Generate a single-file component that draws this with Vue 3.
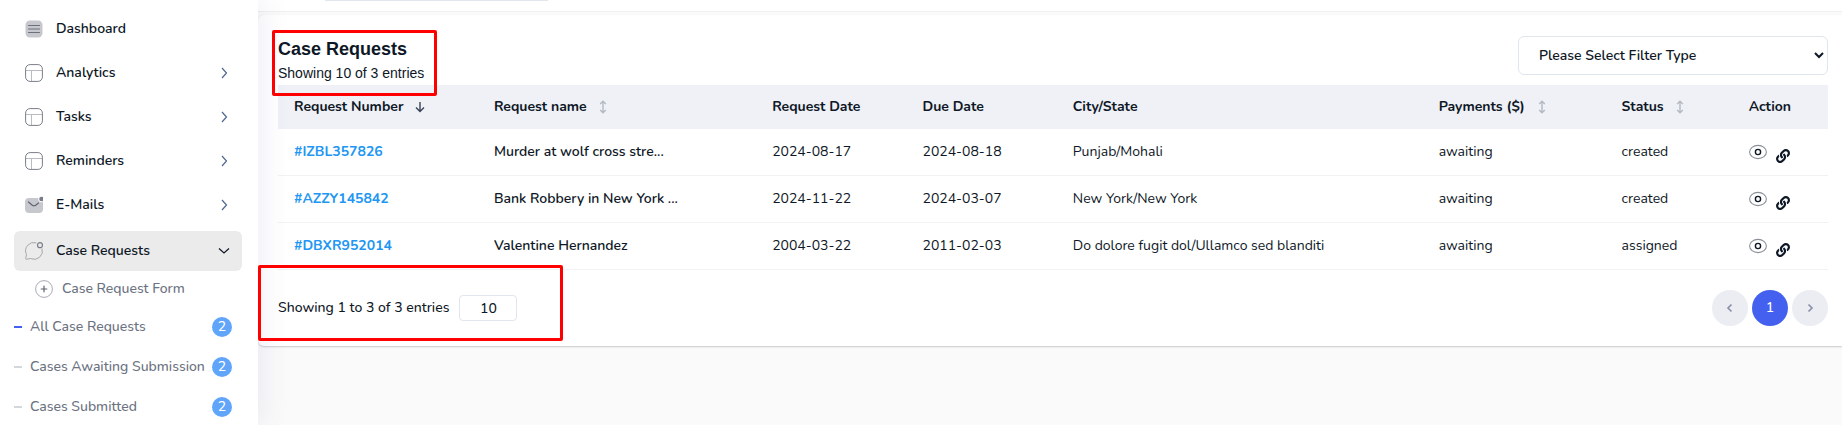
<template>
  <div class="app">
    <aside class="sidebar">
      <nav class="menu">
        <a v-for="item in menu" :key="item.label" href="#" class="menu-item" :class="{ active: item.active }">
          <svg v-if="item.icon === 'list'" class="icon" viewBox="0 0 18 18">
            <rect x="0.5" y="0.5" width="17" height="17" rx="4.5" fill="#c6c8cd" />
            <path d="M3.5 5.5h11M3.5 9h11M3.5 12.5h11" stroke="#6b707b" stroke-width="1.2" stroke-linecap="round" />
          </svg>
          <svg v-else-if="item.icon === 'layout'" class="icon" viewBox="0 0 18 18" fill="none">
            <path d="M1 6.5h16M6.5 7v10" stroke="#b9bcc2" />
            <rect x="0.6" y="0.6" width="16.8" height="16.8" rx="4.5" stroke="#787d87" />
          </svg>
          <svg v-else-if="item.icon === 'mail'" class="icon" viewBox="0 0 18 18">
            <path d="M4 2h9.2a3.6 3.6 0 0 0 4.8 4v7a4 4 0 0 1-4 4H4a4 4 0 0 1-4-4V6a4 4 0 0 1 4-4z" fill="#c6c8cd" />
            <path d="M3.5 6L7 9q2 1.5 4 0l2.500-2" fill="none" stroke="#5e636e" stroke-width="1.2" stroke-linecap="round" />
            <circle cx="16.5" cy="3" r="2.3" fill="#787d87" />
          </svg>
          <svg v-else class="icon" viewBox="0 0 18 18" fill="none">
            <path d="M11.5 0.9A8.300 8.300 0 0 0 1.5 12.5L0.7 16.6Q0.7 17.4 1.5 17.3L5.5 16.5A8.300 8.300 0 0 0 17 6.5" stroke="#a5a7ab" />
            <circle cx="15" cy="3.2" r="2.5" stroke="#787d87" stroke-width="1.2" />
          </svg>
          <span class="menu-label">{{ item.label }}</span>
          <svg v-if="item.active" class="chevron" viewBox="0 0 12 12"><path d="M1 3.5L6 8l5-4.500" /></svg>
          <svg v-else-if="item.children" class="chevron" viewBox="0 0 12 12"><path d="M4 1l4.500 5L4 11" /></svg>
        </a>
      </nav>
      <a href="#" class="form-link">
        <svg class="icon" viewBox="0 0 18 18" fill="none">
          <circle cx="9" cy="9" r="8.4" stroke="#a9acb6" />
          <path d="M9 6.200v5.600M6.200 9h5.600" stroke="#5e636e" stroke-width="1.2" stroke-linecap="round" />
        </svg>
        <span>Case Request Form</span>
      </a>
      <ul class="submenu">
        <li v-for="(sub, i) in submenu" :key="sub.label">
          <a href="#" class="sub-item" :class="{ current: i === 0 }">
            <span class="sub-label">{{ sub.label }}</span>
            <span class="badge">{{ sub.count }}</span>
          </a>
        </li>
      </ul>
    </aside>

    <main class="content">
      <header class="topbar">
        <div class="search-edge"></div>
      </header>

      <section class="panel">
        <div class="panel-head">
          <div class="panel-title">
            <h5>Case Requests</h5>
            <p>Showing 10 of 3 entries</p>
            <div class="mark mark-title"></div>
          </div>
          <select v-model="filter" class="filter" aria-label="Filter type">
            <option value="">Please Select Filter Type</option>
          </select>
        </div>

        <table class="requests">
          <thead>
            <tr>
              <th v-for="col in columns" :key="col.label" :class="col.cls">
                {{ col.label }}
                <svg v-if="col.sort === 'desc'" class="sort" viewBox="0 0 14 14"><path d="M7 2v9.500M3 7.500l4 4 4-4" stroke="#3b4356" stroke-width="1.4" /></svg>
                <svg v-else-if="col.sort" class="sort" viewBox="0 0 14 14"><path d="M7 1.500v11M4.200 4L7 1.300 9.800 4M4.200 10L7 12.700 9.800 10" stroke="#b3bac3" stroke-width="1.4" /></svg>
              </th>
            </tr>
          </thead>
          <tbody>
            <tr v-for="row in rows" :key="row.number">
              <td><a href="#" class="number">{{ row.number }}</a></td>
              <td class="name">{{ row.name }}</td>
              <td>{{ row.requested }}</td>
              <td>{{ row.due }}</td>
              <td>{{ row.place }}</td>
              <td>awaiting</td>
              <td>{{ row.status }}</td>
              <td>
                <div class="actions">
                  <button type="button" aria-label="View">
                    <svg class="eye" viewBox="0 0 18 16" fill="none">
                      <ellipse cx="9" cy="8" rx="8.4" ry="6.6" stroke="#8b8f98" stroke-width="1.1" />
                      <circle cx="9" cy="8" r="2.6" stroke="#0e1726" stroke-width="1.4" />
                    </svg>
                  </button>
                  <button type="button" aria-label="Copy link" class="link-btn">
                    <svg class="link" viewBox="0 0 512 512" fill="currentColor">
                      <path d="M326.612 185.391c59.747 59.809 58.927 155.698.36 214.59-.11.12-.24.25-.36.37l-67.2 67.2c-59.27 59.27-155.699 59.262-214.96 0-59.27-59.26-59.27-155.7 0-214.96l37.106-37.106c9.84-9.84 26.786-3.3 27.294 10.606.648 17.722 3.826 35.527 9.69 52.721 1.986 5.822.567 12.262-3.783 16.612l-13.087 13.087c-28.026 28.026-28.905 73.66-1.155 101.96 28.024 28.579 74.086 28.749 102.325.51l67.2-67.19c28.191-28.191 28.073-73.757 0-101.83-3.701-3.694-7.429-6.564-10.341-8.569a16.037 16.037 0 0 1-6.947-12.606c-.396-10.567 3.348-21.456 11.698-29.806l21.054-21.055c5.521-5.521 14.182-6.199 20.584-1.731a152.482 152.482 0 0 1 20.522 17.197zM467.547 44.449c-59.261-59.262-155.69-59.27-214.96 0l-67.2 67.2c-.12.12-.25.25-.36.37-58.566 58.892-59.387 154.781.36 214.59a152.454 152.454 0 0 0 20.521 17.196c6.402 4.468 15.064 3.789 20.584-1.731l21.054-21.055c8.35-8.35 12.094-19.239 11.698-29.806a16.037 16.037 0 0 0-6.947-12.606c-2.912-2.005-6.64-4.875-10.341-8.569-28.073-28.073-28.191-73.639 0-101.83l67.2-67.19c28.239-28.239 74.3-28.069 102.325.51 27.75 28.3 26.872 73.934-1.155 101.96l-13.087 13.087c-4.35 4.35-5.769 10.79-3.783 16.612 5.864 17.194 9.042 34.999 9.69 52.721.509 13.906 17.454 20.446 27.294 10.606l37.106-37.106c59.271-59.259 59.271-155.699.001-214.959z" />
                    </svg>
                  </button>
                </div>
              </td>
            </tr>
          </tbody>
        </table>

        <div class="panel-foot">
          <label for="page-size">Showing 1 to 3 of 3 entries</label>
          <input id="page-size" v-model="pageSize" type="text" class="page-size" />
          <div class="pager">
            <button type="button" aria-label="Previous page"><svg viewBox="0 0 12 12"><path d="M7.500 2.500L4 6l3.500 3.500" /></svg></button>
            <button type="button" class="on">1</button>
            <button type="button" aria-label="Next page"><svg viewBox="0 0 12 12"><path d="M4.500 2.500L8 6 4.500 9.500" /></svg></button>
          </div>
          <div class="mark mark-foot"></div>
        </div>
      </section>
    </main>
  </div>
</template>

<script setup>
import { ref } from 'vue'

const filter = ref('')
const pageSize = ref('10')

const menu = [
  { label: 'Dashboard', icon: 'list' },
  { label: 'Analytics', icon: 'layout', children: true },
  { label: 'Tasks', icon: 'layout', children: true },
  { label: 'Reminders', icon: 'layout', children: true },
  { label: 'E-Mails', icon: 'mail', children: true },
  { label: 'Case Requests', icon: 'chat', children: true, active: true }
]

const submenu = [
  { label: 'All Case Requests', count: 2 },
  { label: 'Cases Awaiting Submission', count: 2 },
  { label: 'Cases Submitted', count: 2 }
]

const columns = [
  { label: 'Request Number', cls: 'c-number', sort: 'desc' },
  { label: 'Request name', cls: 'c-name', sort: 'both' },
  { label: 'Request Date', cls: 'c-date' },
  { label: 'Due Date', cls: 'c-date' },
  { label: 'City/State', cls: 'c-place' },
  { label: 'Payments ($)', cls: 'c-pay', sort: 'both' },
  { label: 'Status', cls: 'c-status', sort: 'both' },
  { label: 'Action', cls: 'c-action' }
]

const rows = [
  { number: '#IZBL357826', name: 'Murder at wolf cross stre...', requested: '2024-08-17', due: '2024-08-18', place: 'Punjab/Mohali', status: 'created' },
  { number: '#AZZY145842', name: 'Bank Robbery in New York ...', requested: '2024-11-22', due: '2024-03-07', place: 'New York/New York', status: 'created' },
  { number: '#DBXR952014', name: 'Valentine Hernandez', requested: '2004-03-22', due: '2011-02-03', place: 'Do dolore fugit dol/Ullamco sed blanditi', status: 'assigned' }
]
</script>

<style>
body { background: #fafafa; }
</style>

<style scoped>
* { box-sizing: border-box; margin: 0; padding: 0; }
.app { display: flex; height: 100vh; font: 400 14px/20px Nunito, 'Noto Sans', sans-serif; color: #0e1726; overflow: hidden; }
a { color: inherit; text-decoration: none; }
button { border: none; background: none; font: inherit; color: inherit; cursor: pointer; }
svg { display: block; flex-shrink: 0; }

.sidebar { width: 258px; flex-shrink: 0; background: #fff; padding: 9px 16px 0 14px; box-shadow: 5px 0 25px rgba(94,92,154,.1); position: relative; z-index: 1; overflow: hidden; }
.menu { display: flex; flex-direction: column; gap: 4px; }
.menu-item { display: flex; align-items: center; height: 40px; padding: 0 12px 0 11px; border-radius: 6px; font-weight: 600; }
.menu-item.active { background: #ebebeb; margin-top: 2px; }
.icon { width: 18px; height: 18px; }
.menu-label { flex: 1; margin-left: 13px; }
.chevron { width: 12px; height: 12px; fill: none; stroke: #506690; stroke-width: 1.2; }
.active .chevron { stroke: #0e1726; }
.form-link { display: flex; align-items: center; gap: 9px; height: 36px; padding-left: 21px; color: #6b7280; font-weight: 500; }
.submenu { list-style: none; }
.sub-item { display: flex; align-items: center; height: 40px; padding-right: 10px; color: #6b7280; white-space: nowrap; font-weight: 500; }
.sub-item::before { content: ''; width: 8px; height: 2px; margin-right: 8px; background: #d3d6db; flex-shrink: 0; }
.sub-item.current::before { background: #4361ee; }
.sub-label { flex: 1; }
.badge { width: 20px; height: 20px; border-radius: 50%; background: #60a5fa; color: #fff; text-align: center; }

.content { flex: 1; min-width: 0; }
.topbar { height: 12px; padding-left: 67px; background: #fff; border-bottom: 1px solid #f0f0f0; }
.search-edge { width: 223px; height: 1px; background: #e0e6ed; }
.panel { margin-top: 3px; padding: 21px 14px 20px 20px; background: #fff; border-radius: 6px 0 0 6px; box-shadow: 0 1px 2px rgba(0,0,0,.2); }
.panel-head { display: flex; justify-content: space-between; align-items: flex-start; height: 49px; }
.panel-title { position: relative; font-family: 'Liberation Sans', Arial, sans-serif; }
.panel-title h5 { font-size: 18px; line-height: 26px; font-weight: 600; }
.panel-title p { line-height: 22px; }
.filter { width: 310px; height: 39px; padding: 8px 16px; border: 1px solid #e0e6ed; border-radius: 6px; background: #fff; font: inherit; font-weight: 600; color: #0e1726; }

.requests { width: 100%; table-layout: fixed; border-collapse: separate; border-spacing: 0; }
.requests th { height: 44px; padding: 0 16px; background: #eff1f7; text-align: left; font-weight: 700; white-space: nowrap; }
.requests td { height: 47px; padding: 0 16px; border-bottom: 1px solid #f1f2f3; white-space: nowrap; }
.c-number { width: 12.9%; }
.c-name { width: 17.95%; }
.c-date { width: 9.7%; }
.c-place { width: 23.6%; }
.c-pay { width: 11.8%; }
.c-status { width: 8.2%; }
.c-action { width: 6.15%; }
.sort { display: inline-block; width: 14px; height: 14px; margin-left: 6px; vertical-align: -3px; fill: none; }
.number { color: #2196f3; font-weight: 700; }
.requests td.name { font-weight: 600; }
.actions { display: flex; align-items: center; gap: 9px; }
.eye { width: 18px; height: 16px; }
.link-btn { padding-top: 8px; }
.link { width: 14px; height: 14px; }

.panel-foot { display: flex; align-items: center; position: relative; margin-top: 20px; font-weight: 500; }
.page-size { width: 58px; height: 26px; margin-left: 10px; border: 1px solid #e0e6ed; border-radius: 4px; text-align: center; font: inherit; color: #0e1726; background: #fff; }
.pager { display: flex; gap: 4px; margin-left: auto; }
.pager button { display: flex; align-items: center; justify-content: center; width: 36px; height: 36px; border-radius: 50%; background: #ebedf2; }
.pager .on { background: #4361ee; color: #fff; }
.pager svg { width: 12px; height: 12px; fill: none; stroke: #888ea8; stroke-width: 1.6; }

/* red review frames */
.mark { position: absolute; border: 3px solid #f00; border-radius: 2px; pointer-events: none; z-index: 2; }
.mark-title { left: -6px; top: -6px; width: 165px; height: 66px; }
.mark-foot { left: -20px; top: -25px; width: 305px; height: 76px; }
</style>
